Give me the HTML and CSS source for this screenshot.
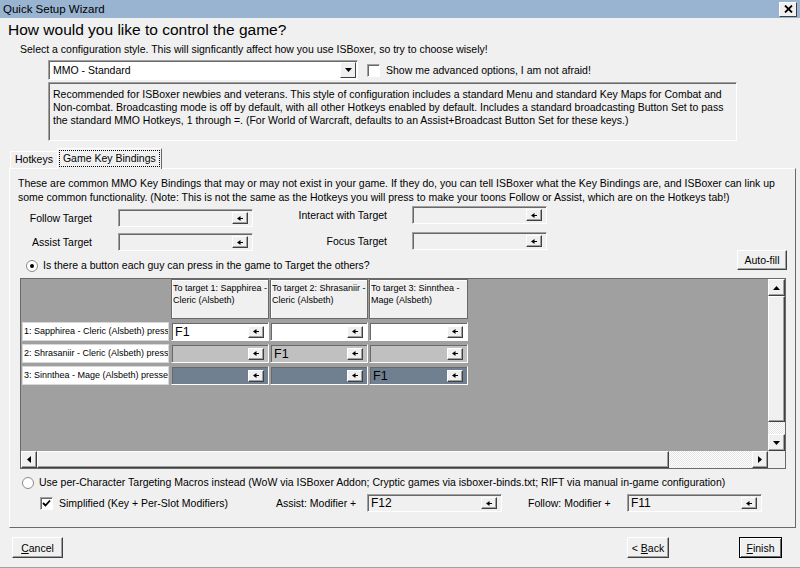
FILE: index.html
```html
<!DOCTYPE html>
<html lang="en">
<head>
    <meta charset="UTF-8">
    <meta name="viewport" content="width=device-width, initial-scale=1.0">
    <title>Quick Setup Wizard</title>
    <link rel="stylesheet" href="styles.css">
</head>
<body>
<div class="window">
    <div class="titlebar">
        <span>Quick Setup Wizard</span>
        <span class="close"><svg width="9" height="8" viewBox="0 0 9 8"><path d="M1 0.5 L8 7.5 M8 0.5 L1 7.5" stroke="#000" stroke-width="1.8"/></svg></span>
    </div>

    <h1>How would you like to control the game?</h1>
    <p class="intro">Select a configuration style. This will signficantly affect how you use ISBoxer, so try to choose wisely!</p>

    <div class="style-row">
        <div class="combo">
            <span>MMO - Standard</span>
            <span class="drop"><svg width="7" height="4" viewBox="0 0 7 4"><path d="M0 0 H7 L3.5 4 Z" fill="#000"/></svg></span>
        </div>
        <div class="check"><span class="checkbox"></span>Show me advanced options, I am not afraid!</div>
    </div>

    <div class="desc">Recommended for ISBoxer newbies and veterans. This style of configuration includes a standard Menu and standard Key Maps for Combat and<br>Non-combat. Broadcasting mode is off by default, with all other Hotkeys enabled by default. Includes a standard broadcasting Button Set to pass<br>the standard MMO Hotkeys, 1 through =. (For World of Warcraft, defaults to an Assist+Broadcast Button Set for these keys.)</div>

    <div class="tabs">
        <span class="tab">Hotkeys</span>
        <span class="tab active"><span class="focus">Game Key Bindings</span></span>
    </div>

    <div class="panel">
        <p class="note">These are common MMO Key Bindings that may or may not exist in your game. If they do, you can tell ISBoxer what the Key Bindings are, and ISBoxer can link up<br>some common functionality. (Note: This is not the same as the Hotkeys you will press to make your toons Follow or Assist, which are on the Hotkeys tab!)</p>

        <div class="bindings">
            <div class="bind-col left">
                <div class="bind"><span class="bind-label">Follow Target</span><span class="keybox"><span class="key"></span><span class="clr"></span></span></div>
                <div class="bind"><span class="bind-label">Assist Target</span><span class="keybox"><span class="key"></span><span class="clr"></span></span></div>
            </div>
            <div class="bind-col right">
                <div class="bind"><span class="bind-label">Interact with Target</span><span class="keybox"><span class="key"></span><span class="clr"></span></span></div>
                <div class="bind"><span class="bind-label">Focus Target</span><span class="keybox"><span class="key"></span><span class="clr"></span></span></div>
            </div>
        </div>

        <div class="target-row">
            <div class="radio-line first"><span class="radio on"></span>Is there a button each guy can press in the game to Target the others?</div>
            <button class="btn autofill">Auto-fill</button>
        </div>

        <div class="grid">
            <div class="cells">
                <div class="corner"></div>
                <div class="colhead">To target 1: Sapphirea -<br>Cleric (Alsbeth)</div>
                <div class="colhead">To target 2: Shrasaniir -<br>Cleric (Alsbeth)</div>
                <div class="colhead">To target 3: Sinnthea -<br>Mage (Alsbeth)</div>

                <div class="rowhead"><span>1: Sapphirea - Cleric (Alsbeth) presses</span></div>
                <div class="cell r1"><span class="key">F1</span><span class="clr"></span></div>
                <div class="cell r1"><span class="key"></span><span class="clr"></span></div>
                <div class="cell r1"><span class="key"></span><span class="clr"></span></div>

                <div class="rowhead"><span>2: Shrasaniir - Cleric (Alsbeth) presses</span></div>
                <div class="cell r2"><span class="key"></span><span class="clr"></span></div>
                <div class="cell r2"><span class="key">F1</span><span class="clr"></span></div>
                <div class="cell r2"><span class="key"></span><span class="clr"></span></div>

                <div class="rowhead"><span>3: Sinnthea - Mage (Alsbeth) presses</span></div>
                <div class="cell r3"><span class="key"></span><span class="clr"></span></div>
                <div class="cell r3"><span class="key"></span><span class="clr"></span></div>
                <div class="cell r3"><span class="key">F1</span><span class="clr"></span></div>
            </div>

            <div class="vscroll">
                <span class="arrow"><svg width="7" height="4" viewBox="0 0 7 4"><path d="M0 4 H7 L3.5 0 Z" fill="#000"/></svg></span>
                <span class="thumb v"></span>
                <span class="track"></span>
                <span class="arrow"><svg width="7" height="4" viewBox="0 0 7 4"><path d="M0 0 H7 L3.5 4 Z" fill="#000"/></svg></span>
            </div>
            <div class="hscroll">
                <span class="arrow"><svg width="4" height="7" viewBox="0 0 4 7"><path d="M4 0 V7 L0 3.5 Z" fill="#000"/></svg></span>
                <span class="thumb h"></span>
                <span class="track"></span>
                <span class="arrow"><svg width="4" height="7" viewBox="0 0 4 7"><path d="M0 0 V7 L4 3.5 Z" fill="#000"/></svg></span>
            </div>
            <div class="sizer"></div>
        </div>

        <div class="radio-line macros"><span class="radio"></span>Use per-Character Targeting Macros instead (WoW via ISBoxer Addon; Cryptic games via isboxer-binds.txt; RIFT via manual in-game configuration)</div>

        <div class="simple-row">
            <span class="checkbox checked"><svg width="9" height="9" viewBox="0 0 9 9"><path d="M1 4 L3.5 6.5 L8 1.5" stroke="#000" stroke-width="1.8" fill="none"/></svg></span>
            <span class="simple-label">Simplified (Key + Per-Slot Modifiers)</span>
            <span class="mod-label">Assist: Modifier +</span>
            <span class="keybox"><span class="key">F12</span><span class="clr"></span></span>
            <span class="mod-label follow">Follow: Modifier +</span>
            <span class="keybox"><span class="key">F11</span><span class="clr"></span></span>
        </div>
    </div>

    <div class="buttons">
        <button class="btn cancel"><u>C</u>ancel</button>
        <button class="btn back">&lt; <u>B</u>ack</button>
        <button class="btn finish"><u>F</u>inish</button>
    </div>
</div>
</body>
</html>
```

FILE: styles.css
```css
* { box-sizing: border-box; }

body {
    margin: 0;
    background: #f0f0f0;
    font-family: "Liberation Sans", Arial, sans-serif;
    font-size: 10.5px;
    color: #000;
}
.window {
    width: 800px;
    height: 568px;
    overflow: hidden;
    border-bottom: 1px solid #a0a0a0;
}
p { margin: 0; }

/* title bar */
.titlebar {
    height: 18px;
    background: #99b4d1;
    display: flex;
    align-items: center;
    justify-content: space-between;
    padding: 0 3px 0 3px;
    font-size: 11.5px;
}
.close {
    width: 18px;
    height: 15px;
    background: #f0f0f0;
    border: 1px solid;
    border-color: #fff #404040 #404040 #fff;
    display: flex;
    align-items: center;
    justify-content: center;
}

h1 {
    font-size: 15.5px;
    font-weight: normal;
    line-height: 20px;
    margin: 2px 0 0 8px;
}
.intro {
    margin: 3px 0 0 20px;
    line-height: 13px;
}

/* style selection */
.style-row {
    display: flex;
    align-items: center;
    height: 20px;
    margin: 4px 0 0 48px;
}
.combo {
    width: 310px;
    height: 20px;
    background: #fff;
    border: 1px solid;
    border-color: #a0a0a0 #fff #fff #a0a0a0;
    box-shadow: inset 1px 1px #696969;
    display: flex;
    align-items: center;
    padding: 0 1px 0 4px;
}
.drop {
    margin-left: auto;
    width: 16px;
    height: 16px;
    background: #f0f0f0;
    border: 1px solid;
    border-color: #fff #404040 #404040 #fff;
    display: flex;
    align-items: center;
    justify-content: center;
}
.check {
    display: flex;
    align-items: center;
    margin-left: 9px;
}
.checkbox {
    width: 13px;
    height: 13px;
    background: #fff;
    border: 1px solid;
    border-color: #a0a0a0 #fff #fff #a0a0a0;
    box-shadow: inset 1px 1px #696969;
    margin-right: 6px;
    display: flex;
    align-items: center;
    justify-content: center;
}
.desc {
    width: 689px;
    height: 59px;
    margin: 2px 0 0 48px;
    padding: 5px 4px;
    line-height: 13px;
    white-space: nowrap;
    border: 1px solid;
    border-color: #a0a0a0 #fff #fff #a0a0a0;
    box-shadow: inset 1px 1px #696969;
}

/* tabs */
.tabs {
    display: flex;
    align-items: flex-end;
    height: 20px;
    margin: 7px 0 0 10px;
}
.tab {
    height: 17px;
    padding: 0 4px;
    line-height: 15px;
    border: 1px solid;
    border-bottom: none;
    border-color: #fff #696969 #696969 #fff;
}
.tab.active {
    position: relative;
    z-index: 1;
    height: 21px;
    margin-bottom: -1px;
    margin-left: -1px;
    padding: 1px 1px 0;
    background: #f0f0f0;
}
.focus {
    display: block;
    border: 1px dotted #000;
    padding: 0 3px;
    line-height: 15px;
}

/* tab page */
.panel {
    width: 787px;
    height: 360px;
    margin-left: 9px;
    padding: 7px 8px 0 8px;
    border: 1px solid;
    border-color: #fff #696969 #696969 #fff;
}
.note {
    line-height: 14px;
    white-space: nowrap;
}
.bindings {
    display: flex;
    align-items: flex-start;
    margin-top: 2px;
}
.bind-col {
    display: flex;
    flex-direction: column;
}
.bind-col.left { margin-top: 3px; gap: 6px; }
.bind-col.right { gap: 8px; }
.bind {
    display: flex;
    align-items: center;
    height: 18px;
}
.bind-label {
    text-align: right;
}
.left .bind-label { width: 74px; margin-right: 26px; }
.right .bind-label { width: 134px; margin-right: 25px; }

.keybox {
    width: 135px;
    height: 18px;
    background: #f0f0f0;
    border: 1px solid;
    border-color: #a0a0a0 #fff #fff #a0a0a0;
    box-shadow: inset 1px 1px #696969;
    display: flex;
    align-items: center;
    padding: 0 4px 0 3px;
}
.key {
    flex: 1;
    font-size: 12px;
}
.clr {
    flex: none;
    width: 16px;
    height: 12px;
    background: #f0f0f0 url("data:image/svg+xml,%3Csvg xmlns='http://www.w3.org/2000/svg' width='7' height='5'%3E%3Cpath d='M0 2.5 L3.5 0 V5 Z' fill='%23000'/%3E%3Cpath d='M3 2 H6 V3 H3 Z' fill='%23000'/%3E%3C/svg%3E") center no-repeat;
    border: 1px solid;
    border-color: #fff #404040 #404040 #fff;
    box-shadow: inset -1px -1px #a0a0a0;
}

.target-row {
    display: flex;
    align-items: flex-end;
    justify-content: space-between;
    height: 20px;
    margin-top: -1px;
}
.radio-line {
    display: flex;
    align-items: center;
    line-height: 13px;
}
.radio-line.first { margin: 0 0 -2px 8px; }
.radio {
    width: 12px;
    height: 12px;
    border-radius: 50%;
    background: #fff;
    border: 1px solid #8a8a8a;
    margin-right: 5px;
    display: flex;
    align-items: center;
    justify-content: center;
}
.radio.on::after {
    content: "";
    width: 4px;
    height: 4px;
    border-radius: 50%;
    background: #000;
}

.btn {
    font-family: "Liberation Sans", Arial, sans-serif;
    font-size: 10.5px;
    color: #000;
    background: #f0f0f0;
    border: 1px solid;
    border-color: #fff #404040 #404040 #fff;
    box-shadow: inset -1px -1px #a0a0a0;
    padding: 0;
}
.autofill { width: 50px; height: 20px; }

/* targeting grid */
.grid {
    width: 766px;
    height: 191px;
    margin: 8px 0 0 2px;
    border: 1px solid #696969;
    background: #a0a0a0;
    display: grid;
    grid-template-columns: 1fr 17px;
    grid-template-rows: 1fr 17px;
}
.cells {
    overflow: hidden;
    display: grid;
    grid-template-columns: 149px 98px 98px 99px;
    grid-template-rows: 40px 19px 19px 19px;
    column-gap: 1px;
    row-gap: 3px;
    align-content: start;
}
.colhead {
    background: #f0f0f0;
    border: 1px solid #696969;
    box-shadow: inset 1px 1px #fff;
    font-size: 9px;
    line-height: 12px;
    padding: 2px 1px;
    white-space: nowrap;
    overflow: hidden;
}
.rowhead {
    margin-left: 1px;
    width: 147px;
    background: #fff;
    border: 1px solid #d8d8d8;
    font-size: 9px;
    line-height: 17px;
    padding-left: 1px;
    white-space: nowrap;
    overflow: hidden;
}
.cell {
    border: 1px solid;
    border-color: #a0a0a0 #fff #fff #a0a0a0;
    box-shadow: inset 1px 1px #696969;
    display: flex;
    align-items: center;
    padding: 0 4px 0 3px;
}
.cell .key { font-size: 12.5px; }
.r1 { background: #fff; }
.r2 { background: #c0c0c0; }
.r3 { background: #708090; }

.vscroll, .hscroll {
    display: flex;
    background: #f0f0f0;
}
.vscroll { flex-direction: column; }
.arrow {
    flex: none;
    width: 17px;
    height: 17px;
    background: #f0f0f0;
    border: 1px solid;
    border-color: #fff #404040 #404040 #fff;
    box-shadow: inset -1px -1px #a0a0a0;
    display: flex;
    align-items: center;
    justify-content: center;
}
.hscroll .arrow { width: 16px; }
.thumb {
    flex: none;
    background: #f0f0f0;
    border: 1px solid;
    border-color: #fff #404040 #404040 #fff;
    box-shadow: inset -1px -1px #a0a0a0;
}
.thumb.v { height: 126px; }
.thumb.h { width: 632px; }
.track {
    flex: 1;
    background: repeating-conic-gradient(#fff 0 25%, #e4e4e4 0 50%) 0 0 / 2px 2px;
}
.sizer { background: #f0f0f0; }

/* macros option */
.radio-line.macros { margin: 7px 0 0 4px; }
.simple-row {
    display: flex;
    align-items: center;
    height: 18px;
    margin-top: 5px;
}
.simple-row .checkbox { margin: 0 6px 0 22px; }
.simple-label { width: 217px; }
.mod-label { width: 91px; }
.mod-label.follow { width: 99px; margin-left: 26px; }

/* wizard buttons */
.buttons {
    display: flex;
    margin-top: 9px;
    height: 21px;
}
.buttons .btn { height: 21px; }
.cancel { width: 51px; margin-left: 12px; }
.back { width: 42px; margin-left: auto; }
.finish {
    width: 43px;
    margin: 0 18px 0 70px;
    border: 1px solid #000;
    box-shadow: inset 1px 1px #fff, inset -1px -1px #696969;
}
```
